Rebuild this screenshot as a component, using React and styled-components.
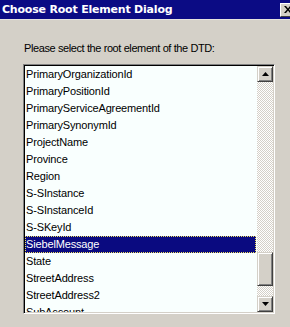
import React from 'react';
import styled, { createGlobalStyle } from 'styled-components';

const items = [
  'PrimaryOrganizationId',
  'PrimaryPositionId',
  'PrimaryServiceAgreementId',
  'PrimarySynonymId',
  'ProjectName',
  'Province',
  'Region',
  'S-SInstance',
  'S-SInstanceId',
  'S-SKeyId',
  'SiebelMessage',
  'State',
  'StreetAddress',
  'StreetAddress2',
  'SubAccount',
];

const selected = 'SiebelMessage';
const totalItems = 84;
const firstVisible = 66;

const Global = createGlobalStyle`
  html, body {
    margin: 0;
    padding: 0;
    background: #d4d0c8;
    overflow: hidden;
  }
`;

const App = () => {
  const trackLen = 214;
  const thumbLen = 34;
  const thumbTop = Math.round((firstVisible / (totalItems - 14)) * (trackLen - thumbLen));
  return (
    <Wrap>
      <Global />
      <TitleBar>
        <Title>Choose Root Element Dialog</Title>
        <CloseBtn>
          <svg width="8" height="7" viewBox="0 0 8 7">
            <path d="M0 0h2l2 2.5L6 0h2L5 3.5 8 7H6L4 4.5 2 7H0l3-3.5z" fill="#000" />
          </svg>
        </CloseBtn>
      </TitleBar>
      <Body>
        <Label>Please select the root element of the DTD:</Label>
        <ListBox>
          <Rows>
            {items.map((it) => (
              <Row key={it} $active={it === selected}>{it}</Row>
            ))}
          </Rows>
          <ScrollBar>
            <ArrowBtn>
              <svg width="7" height="4" viewBox="0 0 7 4"><path d="M3.5 0L7 4H0z" fill="#000" /></svg>
            </ArrowBtn>
            <Track>
              <Thumb style={{ marginTop: thumbTop }} />
            </Track>
            <ArrowBtn>
              <svg width="7" height="4" viewBox="0 0 7 4"><path d="M0 0h7L3.5 4z" fill="#000" /></svg>
            </ArrowBtn>
          </ScrollBar>
        </ListBox>
      </Body>
    </Wrap>
  );
};

export default App;

const Wrap = styled.div`
  width: 298px;
  height: 327px;
  background: #d4d0c8;
  display: flex;
  flex-direction: column;
`;

const TitleBar = styled.div`
  height: 19px;
  background: #0b0b84;
  display: flex;
  align-items: center;
  justify-content: space-between;
  padding: 0 2px 0 2px;
  border-bottom: 1px solid #e6e4df;
`;

const Title = styled.div`
  font-family: "DejaVu Sans", Verdana, sans-serif;
  font-weight: bold;
  font-size: 11px;
  letter-spacing: -0.2px;
  color: #fff;
`;

const CloseBtn = styled.div`
  width: 16px;
  height: 14px;
  box-sizing: border-box;
  background: #d4d0c8;
  border-top: 1px solid #fff;
  border-left: 1px solid #fff;
  border-right: 1px solid #404040;
  border-bottom: 1px solid #404040;
  display: flex;
  align-items: center;
  justify-content: center;
`;

const Body = styled.div`
  padding: 22px 0 0 23px;
  display: flex;
  flex-direction: column;
`;

const Label = styled.div`
  font-family: "Liberation Sans", Arial, sans-serif;
  font-size: 11px;
  line-height: 13px;
  letter-spacing: -0.4px;
  color: #000;
  padding-left: 1px;
  margin-bottom: 9px;
`;

const ListBox = styled.div`
  width: 252px;
  height: 250px;
  box-sizing: border-box;
  border-top: 1px solid #808080;
  border-left: 1px solid #808080;
  border-right: 1px solid #fff;
  border-bottom: 1px solid #fff;
  display: flex;
  background: #f9fffe;
  box-shadow: inset 1px 1px 0 #000, inset -1px -1px 0 #d4d0c8;
  padding: 1px;
`;

const Rows = styled.div`
  flex: 1;
  overflow: hidden;
  margin-right: 1px;
`;

const Row = styled.div`
  height: 17px;
  line-height: 17px;
  box-sizing: border-box;
  padding-left: 1px;
  font-family: "Liberation Sans", Arial, sans-serif;
  font-size: 11px;
  letter-spacing: -0.15px;
  white-space: nowrap;
  color: ${(p) => (p.$active ? '#fff' : '#000')};
  background: ${(p) => (p.$active ? '#0a0a80' : 'transparent')};
  outline: ${(p) => (p.$active ? '1px dotted #f0e060' : 'none')};
  outline-offset: -1px;
`;

const ScrollBar = styled.div`
  width: 16px;
  display: flex;
  flex-direction: column;
`;

const raised = `
  box-sizing: border-box;
  background: #d4d0c8;
  border-top: 1px solid #d4d0c8;
  border-left: 1px solid #d4d0c8;
  border-right: 1px solid #404040;
  border-bottom: 1px solid #404040;
  box-shadow: inset 1px 1px 0 #fff, inset -1px -1px 0 #808080;
`;

const ArrowBtn = styled.div`
  ${raised}
  height: 16px;
  display: flex;
  align-items: center;
  justify-content: center;
`;

const Track = styled.div`
  flex: 1;
  display: flex;
  flex-direction: column;
  background-color: #fff;
  background-image: conic-gradient(#d4d0c8 25%, #fff 0 50%, #d4d0c8 0 75%, #fff 0);
  background-size: 2px 2px;
`;

const Thumb = styled.div`
  ${raised}
  height: 34px;
`;
